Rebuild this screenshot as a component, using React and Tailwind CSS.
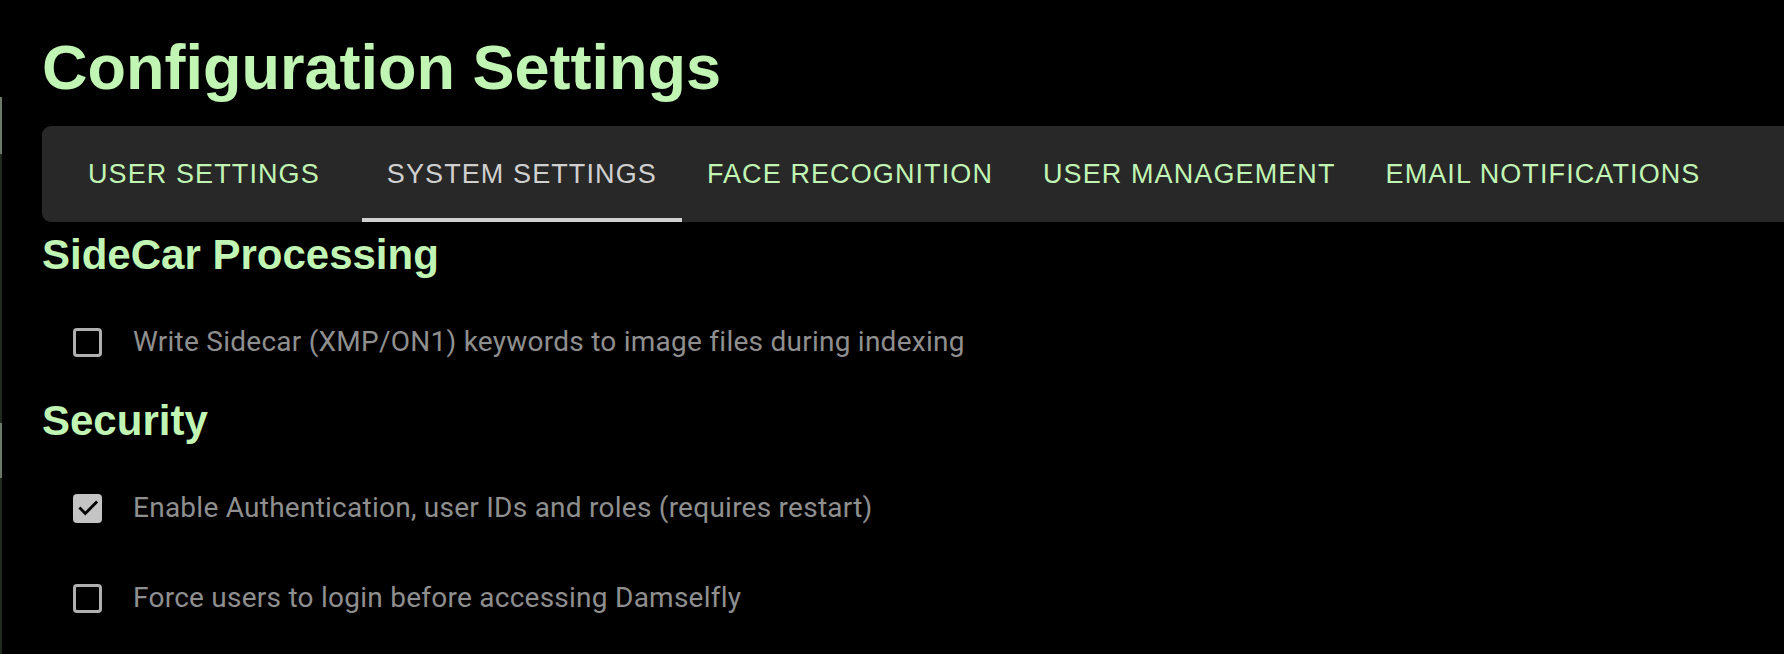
const tabs = [
  { label: "User Settings", active: false },
  { label: "System Settings", active: true },
  { label: "Face Recognition", active: false },
  { label: "User Management", active: false },
  { label: "Email Notifications", active: false },
];

const CheckRow = ({ checked, label }) => {
  return (
    <div className="flex items-center h-[60px] pl-[31px]">
      {checked ? (
        <div className="w-[29px] h-[29px] rounded-[4px] bg-[#c4c4c4] flex items-center justify-center">
          <svg viewBox="0 0 24 24" className="w-[26px] h-[26px]">
            <path d="M5 12.5l4.5 4.5L19.5 7" fill="none" stroke="#000" strokeWidth="2.6" strokeLinecap="square" />
          </svg>
        </div>
      ) : (
        <div className="w-[29px] h-[29px] rounded-[4px] border-[3px] border-[#b0b0b0]" />
      )}
      <span className="ml-[31px] text-[28px] tracking-[0.25px] text-[#8f8f8f] font-['Roboto',sans-serif]">
        {label}
      </span>
    </div>
  );
};

export default function App() {
  return (
    <div className="w-full min-h-[654px] bg-black flex overflow-hidden">
      {/* drawer edge */}
      <div className="w-[2px] shrink-0 flex flex-col pt-[97px]">
        <div className="h-[57px] bg-[#6b7a66]" />
        <div className="h-[269px] bg-[#1f2b1d]" />
        <div className="h-[55px] bg-[#6b7a66]" />
        <div className="flex-1 bg-[#1f2b1d]" />
      </div>

      <div className="flex-1 flex flex-col pl-[40px] font-['Liberation_Sans',Arial,sans-serif]">
        <h1 className="mt-[36px] text-[63px] leading-none font-bold text-[#c1f5b4]">
          Configuration Settings
        </h1>

        {/* Tabs */}
        <div className="mt-[27px] h-[96px] bg-[#282828] rounded-l-[9px] flex pl-[21px] -mr-[20px]">
          {tabs.map((t, i) => (
            <div
              key={t.label}
              className={
                "h-full flex items-center px-[25px] border-b-4 " +
                (i === 0 ? "mr-[17px] " : "") +
                (t.active ? "border-[#d0d0d0] text-[#d0d0d0]" : "border-transparent text-[#c1f5b4]")
              }
            >
              <span className="text-[27px] uppercase tracking-[1.1px] pt-[4px]">{t.label}</span>
            </div>
          ))}
        </div>

        <h2 className="mt-[12px] text-[42px] leading-none font-bold text-[#c1f5b4]">SideCar Processing</h2>
        <div className="mt-[36px]">
          <CheckRow checked={false} label="Write Sidecar (XMP/ON1) keywords to image files during indexing" />
        </div>

        <h2 className="mt-[28px] text-[42px] leading-none font-bold text-[#c1f5b4]">Security</h2>
        <div className="mt-[36px]">
          <CheckRow checked={true} label="Enable Authentication, user IDs and roles (requires restart)" />
        </div>
        <div className="mt-[30px]">
          <CheckRow checked={false} label="Force users to login before accessing Damselfly" />
        </div>
      </div>
    </div>
  );
}
